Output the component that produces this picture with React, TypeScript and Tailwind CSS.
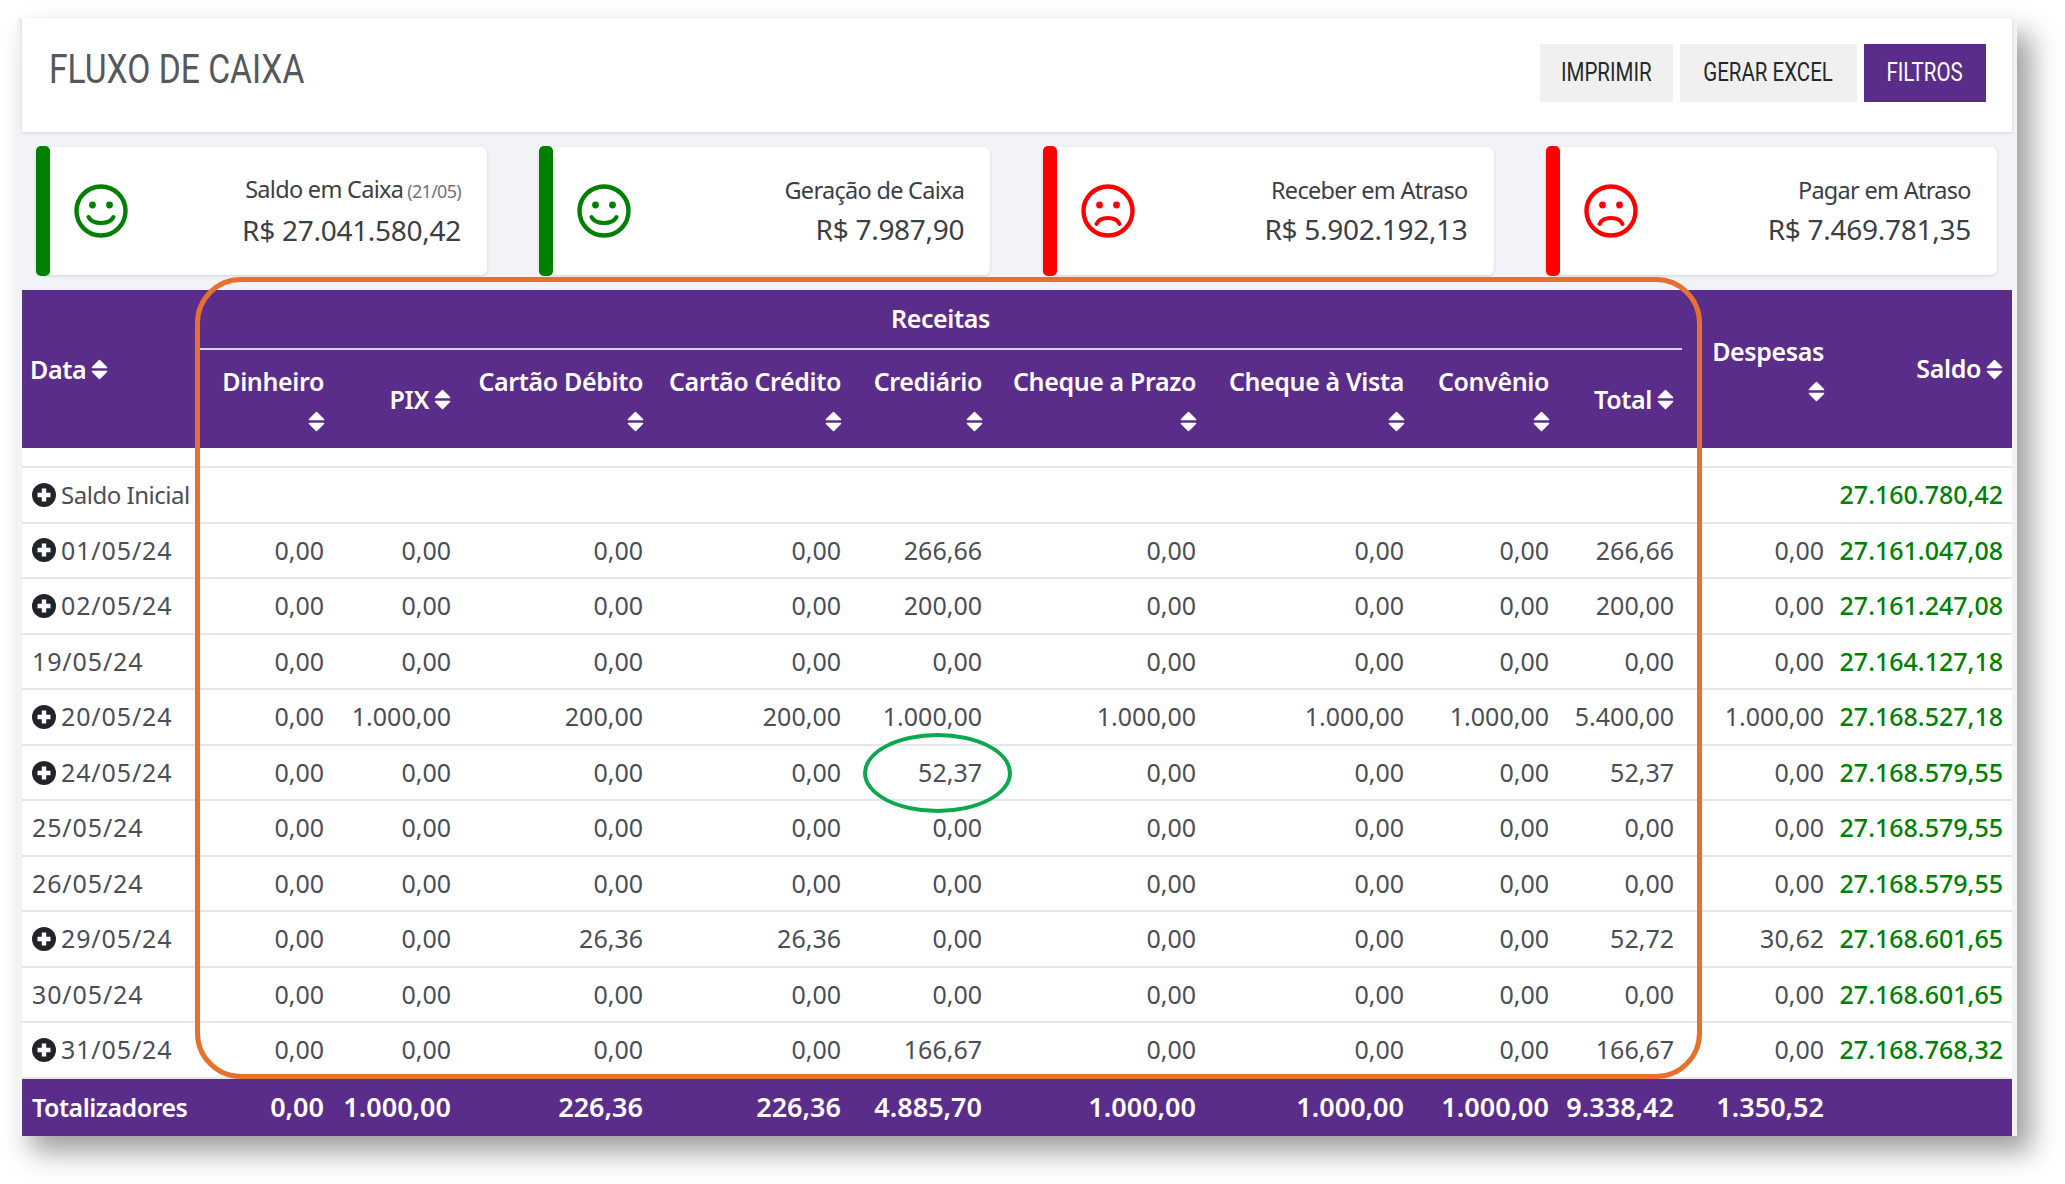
const ROW = "grid grid-cols-[177px_133px_127px_192px_198px_141px_214px_208px_145px_125px_150px_180px]";

function Sort({ className = "" }: { className?: string }) {
  return (
    <svg viewBox="0 0 17 21" className={"w-[17px] h-[21px] shrink-0 " + className} fill="#fff" stroke="#fff" strokeWidth="1.6" strokeLinejoin="round">
      <path d="M8.5 1.5 L15.5 8.5 H1.5 Z" />
      <path d="M1.5 12.5 H15.5 L8.5 19.5 Z" />
    </svg>
  );
}

function Plus() {
  return (
    <svg viewBox="0 0 24 24" className="w-[24px] h-[24px] shrink-0">
      <circle cx="12" cy="12" r="12" fill="#212529" />
      <path d="M12 5.5 V18.5 M5.5 12 H18.5" stroke="#fff" strokeWidth="4.4" />
    </svg>
  );
}

function Face({ happy, color }: { happy: boolean; color: string }) {
  return (
    <svg viewBox="0 0 54 54" className="w-[54px] h-[54px] shrink-0" fill="none" stroke={color}>
      <circle cx="27" cy="27" r="24.5" strokeWidth="4.4" />
      <circle cx="18.5" cy="21" r="3.4" fill={color} stroke="none" />
      <circle cx="35.5" cy="21" r="3.4" fill={color} stroke="none" />
      {happy ? (
        <path d="M14.5 33 C18.5 41 35.5 41 39.5 33" strokeWidth="4" strokeLinecap="round" />
      ) : (
        <path d="M15.5 40 C19 32 35 32 38.5 40" strokeWidth="4" strokeLinecap="round" />
      )}
    </svg>
  );
}

function Card({ color, happy, title, note, value }: { color: string; happy: boolean; title: string; note?: string; value: string }) {
  return (
    <div className="relative w-[451px] h-[128px] bg-white rounded-md shadow-[0_1px_3px_rgba(0,0,0,0.14)] flex items-center pl-[38px] pr-[26px] justify-between">
      <div className="absolute left-0 top-[-1px] bottom-[-1px] w-[14px] rounded-[5px]" style={{ background: color }} />
      <Face happy={happy} color={color} />
      <div className="text-right text-[#3a3f45] mt-[-4px]">
        <div className="text-[23.5px] leading-[32px] mb-[7px] tracking-[-0.03em]">
          {title}
          {note && <span className="text-[18px] text-[#6c757d]"> {note}</span>}
        </div>
        <div className="text-[28px] leading-[32px] tracking-[-0.01em]">{value}</div>
      </div>
    </div>
  );
}

function Head({ label, stack }: { label: string; stack?: boolean }) {
  return stack ? (
    <div className="flex flex-col items-end justify-center pr-[8px] mt-[-2px]">
      <span className="leading-[34px] whitespace-nowrap">{label}</span>
      <Sort className="mt-[13px] mr-[-1px]" />
    </div>
  ) : (
    <div className="flex items-center justify-end pr-[8px] gap-[5px]">
      <span className="leading-[34px]">{label}</span>
      <Sort />
    </div>
  );
}

const rows: { d: string; p: boolean; v: string[] }[] = [
  { d: "01/05/24", p: true, v: ["0,00", "0,00", "0,00", "0,00", "266,66", "0,00", "0,00", "0,00", "266,66", "0,00", "27.161.047,08"] },
  { d: "02/05/24", p: true, v: ["0,00", "0,00", "0,00", "0,00", "200,00", "0,00", "0,00", "0,00", "200,00", "0,00", "27.161.247,08"] },
  { d: "19/05/24", p: false, v: ["0,00", "0,00", "0,00", "0,00", "0,00", "0,00", "0,00", "0,00", "0,00", "0,00", "27.164.127,18"] },
  { d: "20/05/24", p: true, v: ["0,00", "1.000,00", "200,00", "200,00", "1.000,00", "1.000,00", "1.000,00", "1.000,00", "5.400,00", "1.000,00", "27.168.527,18"] },
  { d: "24/05/24", p: true, v: ["0,00", "0,00", "0,00", "0,00", "52,37", "0,00", "0,00", "0,00", "52,37", "0,00", "27.168.579,55"] },
  { d: "25/05/24", p: false, v: ["0,00", "0,00", "0,00", "0,00", "0,00", "0,00", "0,00", "0,00", "0,00", "0,00", "27.168.579,55"] },
  { d: "26/05/24", p: false, v: ["0,00", "0,00", "0,00", "0,00", "0,00", "0,00", "0,00", "0,00", "0,00", "0,00", "27.168.579,55"] },
  { d: "29/05/24", p: true, v: ["0,00", "0,00", "26,36", "26,36", "0,00", "0,00", "0,00", "0,00", "52,72", "30,62", "27.168.601,65"] },
  { d: "30/05/24", p: false, v: ["0,00", "0,00", "0,00", "0,00", "0,00", "0,00", "0,00", "0,00", "0,00", "0,00", "27.168.601,65"] },
  { d: "31/05/24", p: true, v: ["0,00", "0,00", "0,00", "0,00", "166,67", "0,00", "0,00", "0,00", "166,67", "0,00", "27.168.768,32"] },
];

const totals = ["0,00", "1.000,00", "226,36", "226,36", "4.885,70", "1.000,00", "1.000,00", "1.000,00", "9.338,42", "1.350,52", ""];

function DateCell({ d, p }: { d: string; p: boolean }) {
  return (
    <div className="flex items-center pl-[10px] gap-[5px] whitespace-nowrap tracking-[0.035em]">
      {p && <Plus />}
      <span>{d}</span>
    </div>
  );
}

export default function App() {
  return (
    <div className="relative w-[2065px] h-[1184px] bg-white overflow-hidden pl-[17px] pt-[18px] font-['Noto_Sans',sans-serif]">
      <div className="relative w-[2000px] h-[1118px] bg-[#f1f3f7] px-[5px] shadow-[14px_16px_26px_rgba(0,0,0,0.38)]">
        <div className="h-[114px] bg-white shadow-[0_1px_3px_rgba(0,0,0,0.14)] flex items-start justify-between pl-[27px] pr-[26px]">
          <h1 className="mt-[22px] text-[40px] leading-[60px] text-[#55585c] font-['Roboto',sans-serif] origin-left scale-x-[0.84] whitespace-nowrap">FLUXO DE CAIXA</h1>
          <div className="flex gap-[7px] mt-[26px] text-[25px] font-['Roboto',sans-serif] text-[#26292c]">
            <button className="w-[133px] h-[58px] bg-[#f0f0f0]">
              <span className="inline-block scale-x-[0.82] whitespace-nowrap">IMPRIMIR</span>
            </button>
            <button className="w-[177px] h-[58px] bg-[#f0f0f0] flex items-center justify-center">
              <span className="inline-block scale-x-[0.82] whitespace-nowrap">GERAR EXCEL</span>
            </button>
            <button className="w-[122px] h-[58px] bg-[#5b2d8b] text-white">
              <span className="inline-block scale-x-[0.82] whitespace-nowrap">FILTROS</span>
            </button>
          </div>
        </div>

        <div className="flex gap-[52.3px] mt-[15px] pl-[14px]">
          <Card color="#008000" happy title="Saldo em Caixa" note="(21/05)" value="R$ 27.041.580,42" />
          <Card color="#008000" happy title="Geração de Caixa" value="R$ 7.987,90" />
          <Card color="#ff0000" happy={false} title="Receber em Atraso" value="R$ 5.902.192,13" />
          <Card color="#ff0000" happy={false} title="Pagar em Atraso" value="R$ 7.469.781,35" />
        </div>

        <div className="mt-[15px] bg-white text-[25px] text-[#4a4f55]">
          <div className={ROW + " h-[158px] bg-[#5b2d8b] text-white font-semibold text-[25px] tracking-[-0.015em] grid-rows-[60px_98px]"}>
            <div className="row-span-2 flex items-center pl-[8px] gap-[5px] mt-[1px]">
              <span>Data</span>
              <Sort />
            </div>
            <div className="col-span-9 flex items-center justify-center border-b-2 border-[#d9d3e6]">Receitas</div>
            <div className="row-span-2 flex flex-col items-end justify-center pr-[8px] mt-[-2px]">
              <span className="leading-[34px]">Despesas</span>
              <Sort className="mt-[13px] mr-[-1px]" />
            </div>
            <div className="row-span-2 flex items-center justify-end pr-[9px] gap-[5px]">
              <span>Saldo</span>
              <Sort />
            </div>
            <Head label="Dinheiro" stack />
            <Head label="PIX" />
            <Head label="Cartão Débito" stack />
            <Head label="Cartão Crédito" stack />
            <Head label="Crediário" stack />
            <Head label="Cheque a Prazo" stack />
            <Head label="Cheque à Vista" stack />
            <Head label="Convênio" stack />
            <Head label="Total" />
          </div>

          <div className="h-[20px] border-b-2 border-[#e3e6ea]" />

          <div className={ROW + " h-[55.55px] items-center border-b-2 border-[#e3e6ea]"}>
            <div className="col-span-11 flex items-center pl-[10px] gap-[5px] text-[24px] tracking-[-0.02em]">
              <Plus />
              <span>Saldo Inicial</span>
            </div>
            <div className="text-right pr-[9px] text-[#008000] font-medium">27.160.780,42</div>
          </div>

          {rows.map((r) => (
            <div key={r.d} className={ROW + " h-[55.55px] items-center border-b-2 border-[#e3e6ea] last:border-b-0"}>
              <DateCell d={r.d} p={r.p} />
              {r.v.map((c, i) => (
                <div key={i} className={i === 10 ? "text-right pr-[9px] text-[#008000] font-medium" : "text-right pr-[8px]"}>
                  {c}
                </div>
              ))}
            </div>
          ))}

          <div className={ROW + " h-[57px] items-center bg-[#5b2d8b] text-white font-semibold text-[27px]"}>
            <div className="pl-[10px] whitespace-nowrap text-[25px] tracking-[-0.02em]">Totalizadores</div>
            {totals.map((c, i) => (
              <div key={i} className="text-right pr-[8px]">
                {c}
              </div>
            ))}
          </div>
        </div>
      </div>

      <div className="absolute left-[195px] top-[277px] w-[1507px] h-[802px] border-[5.5px] border-[#e8702f] rounded-[46px] pointer-events-none" />
      <div className="absolute left-[863px] top-[733px] w-[149px] h-[80px] border-[4.5px] border-[#0ba84e] rounded-[50%] pointer-events-none" />
    </div>
  );
}
